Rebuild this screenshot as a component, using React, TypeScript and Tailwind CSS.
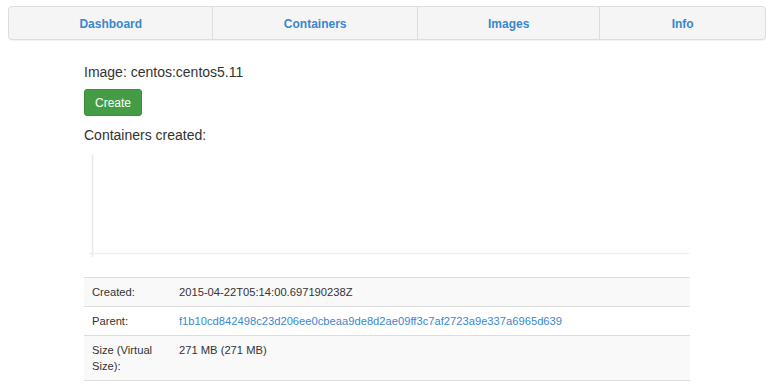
import React from 'react';

const TABS = [
  { label: 'Dashboard', w: 'w-[204px]' },
  { label: 'Containers', w: 'w-[205px]' },
  { label: 'Images', w: 'w-[183px]' },
  { label: 'Info', w: 'w-[166px]' },
];

const ROWS = [
  { label: 'Created:', value: '2015-04-22T05:14:00.697190238Z' },
  { label: 'Parent:', value: 'f1b10cd842498c23d206ee0cbeaa9de8d2ae09ff3c7af2723a9e337a6965d639', link: true },
  { label: 'Size (Virtual Size):', value: '271 MB (271 MB)' },
];

export default function App() {
  return (
    <div className="min-h-screen bg-white text-[#333] font-['Liberation_Sans',Arial,sans-serif]">
      <div className="pt-[6px] px-[8px]">
        <nav className="flex w-[758px] h-[34px] bg-[#f5f5f5] border border-[#dddddd] rounded-[4px] shadow-[0_1px_1px_rgba(0,0,0,0.05)]">
          {TABS.map((t, i) => (
            <a
              key={t.label}
              className={`${t.w} flex items-center justify-center pt-[1px] text-[12px] font-bold text-[#3a87cf] ${i > 0 ? 'border-l border-[#dddddd]' : ''}`}
            >
              {t.label}
            </a>
          ))}
        </nav>
      </div>

      <div className="pl-[84px] w-[690px]">
        <h4 className="mt-[22px] text-[14px] leading-[20px]">Image: centos:centos5.11</h4>
        <button className="mt-[7px] h-[27px] px-[10px] text-[12px] text-white bg-[#449d44] border border-[#3d8b3d] rounded-[3px]">
          Create
        </button>
        <h4 className="mt-[9px] text-[14px] leading-[20px]">Containers created:</h4>

        {/* empty chart */}
        <svg width="606" height="106" className="block mt-[10px]">
          <line x1="8.5" y1="0" x2="8.5" y2="102" stroke="#e8e8e8" strokeWidth="1.5" />
          <line x1="5" y1="98.5" x2="605" y2="98.5" stroke="#eeeeee" strokeWidth="1.5" />
        </svg>

        <table className="mt-[16px] w-[606px] text-[11.2px] leading-[16px] border-collapse">
          <tbody>
            {ROWS.map((r, i) => (
              <tr key={r.label} className={i % 2 === 0 ? 'bg-[#f9f9f9]' : 'bg-white'}>
                <td className="w-[87px] px-[8px] py-[6px] border-t border-[#dddddd] align-top">{r.label}</td>
                <td className="px-[8px] py-[6px] border-t border-[#dddddd] align-top">
                  {r.link ? <a className="text-[#3a87cf]">{r.value}</a> : r.value}
                </td>
              </tr>
            ))}
            <tr><td colSpan={2} className="border-t border-[#dddddd]" /></tr>
          </tbody>
        </table>
      </div>
    </div>
  );
}
